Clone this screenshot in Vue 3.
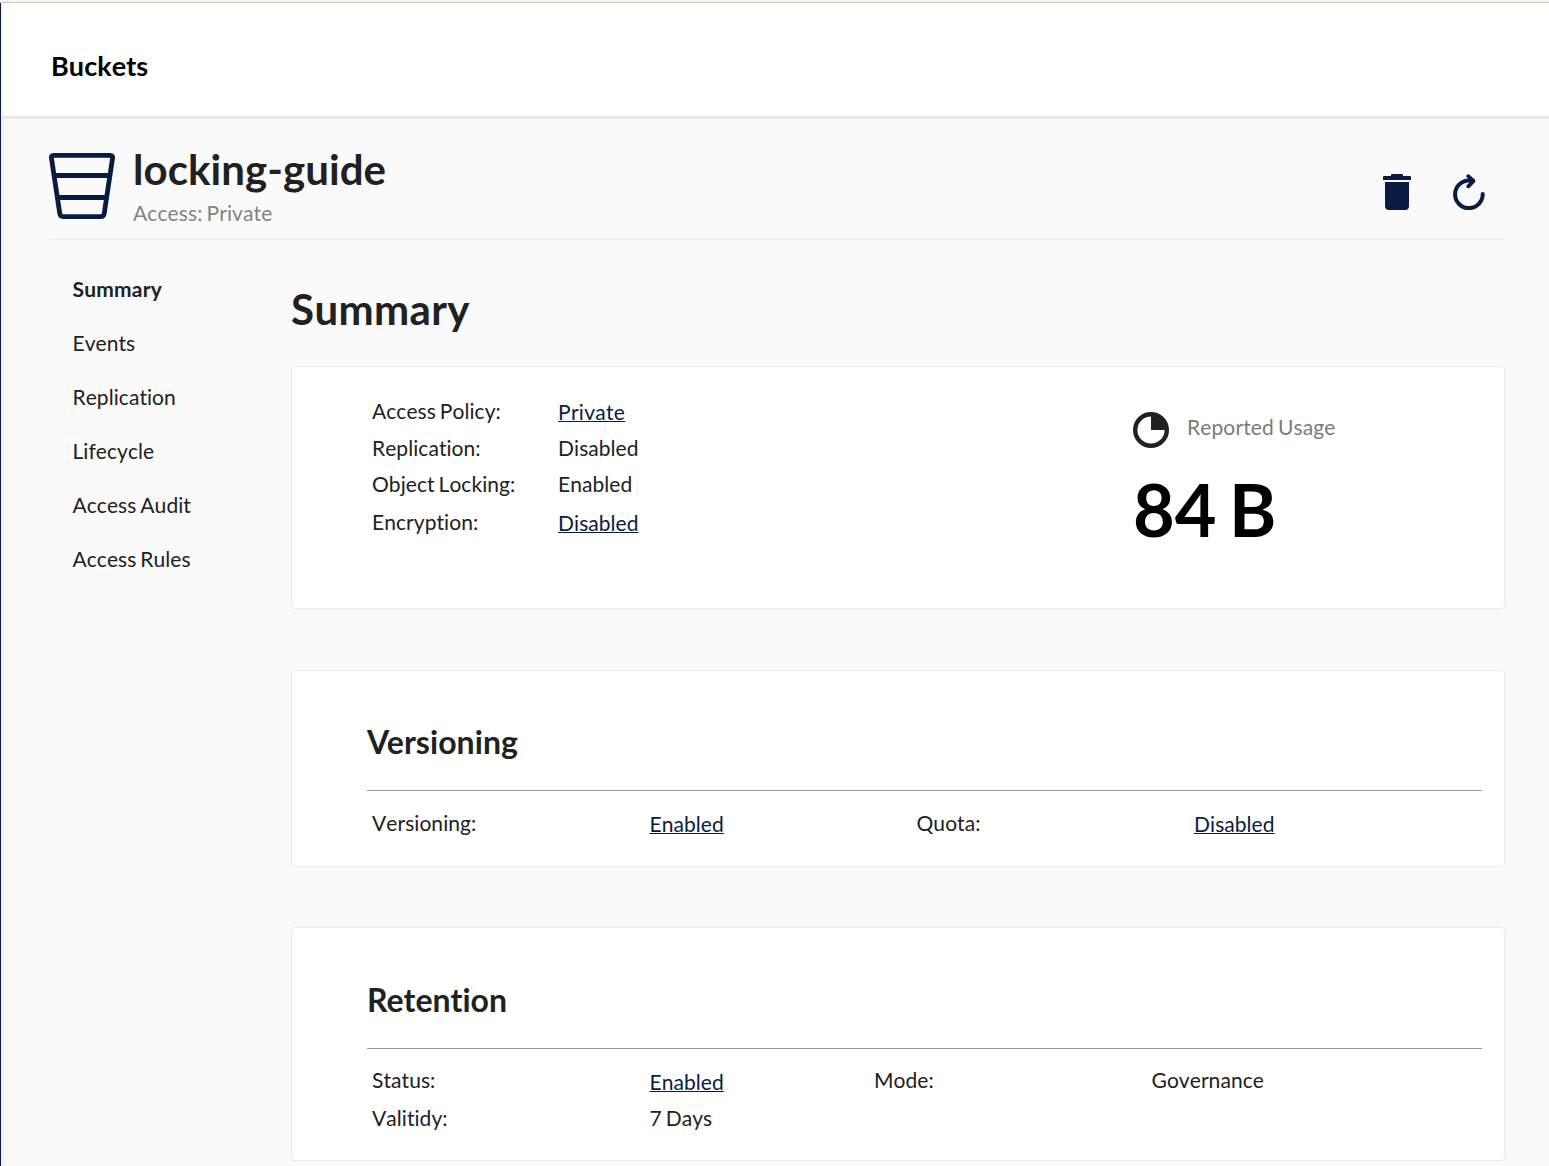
<script setup>
const tabs = ['Summary', 'Events', 'Replication', 'Lifecycle', 'Access Audit', 'Access Rules']
const details = [
  { label: 'Access Policy:', value: 'Private', link: true, height: 37 },
  { label: 'Replication:', value: 'Disabled', height: 36 },
  { label: 'Object Locking:', value: 'Enabled', height: 38 },
  { label: 'Encryption:', value: 'Disabled', link: true, height: 38 },
]
</script>

<template>
  <div class="page">
    <div class="chrome"></div>
    <div class="shell">
      <header class="topbar">Buckets</header>
      <main>
        <section class="bucket">
          <svg class="bucket-icon" width="66" height="66" viewBox="0 0 66 66" fill="none" stroke="#081c42" stroke-width="4.8" stroke-linejoin="round">
            <path d="M4.6 2.4H61.4Q64 2.4 63.5 5.3L55.2 60.7Q54.7 63.6 52 63.6H14Q11.300 63.600 10.800 60.700L2.500 5.300Q2 2.400 4.600 2.400ZM5.500 22.500H60.500M9 44.500H57" />
          </svg>
          <div class="names">
            <h1>locking-guide</h1>
            <span class="access">Access: Private</span>
          </div>
          <div class="actions">
            <svg width="28" height="36" viewBox="0 0 28 36" fill="#081c42">
              <path d="M8 1Q8 0 9 0H19Q20 0 20 1V2H27Q28 2 28 3V6H0V3Q0 2 1 2H8ZM2 8H26V32Q26 36 22 36H6Q2 36 2 32Z" />
            </svg>
            <svg class="refresh" width="32" height="36" viewBox="0 0 32 36" fill="none" stroke="#081c42" stroke-width="4" stroke-linecap="round" stroke-linejoin="round">
              <path d="M29.700 20A13.800 13.800 0 1 1 15.800 6.500H20" />
              <path d="M15.300 2.200L20.400 7.200L15.300 12.300" stroke-width="3.800" />
            </svg>
          </div>
        </section>
        <div class="body">
          <nav>
            <a v-for="(t, i) in tabs" :key="t" :class="{ active: i === 0 }">{{ t }}</a>
          </nav>
          <div class="content">
            <h2>Summary</h2>
            <section class="card overview">
              <div class="details">
                <div v-for="d in details" :key="d.label" class="detail" :style="{ height: d.height + 'px' }">
                  <span class="label">{{ d.label }}</span>
                  <span :class="{ link: d.link }">{{ d.value }}</span>
                </div>
              </div>
              <div class="usage">
                <div class="usage-head">
                  <svg width="36" height="36" viewBox="0 0 36 36">
                    <circle cx="18" cy="18" r="15.800" fill="none" stroke="#212121" stroke-width="4.400" />
                    <path d="M18 4A14 14 0 0 1 32 18H18Z" fill="#212121" />
                  </svg>
                  <span>Reported Usage</span>
                </div>
                <div class="amount">84 B</div>
              </div>
            </section>
            <section class="card versioning">
              <h3>Versioning</h3>
              <div class="row">
                <span class="c1">Versioning:</span>
                <span class="c2 link">Enabled</span>
                <span class="c1">Quota:</span>
                <span class="link">Disabled</span>
              </div>
            </section>
            <section class="card retention">
              <h3>Retention</h3>
              <div class="row">
                <span class="c1">Status:</span>
                <span class="c2 link">Enabled</span>
                <span class="c1">Mode:</span>
                <span>Governance</span>
              </div>
              <div class="row second">
                <span class="c1">Valitidy:</span>
                <span>7 Days</span>
              </div>
            </section>
          </div>
        </div>
      </main>
    </div>
  </div>
</template>

<style>
body {
  margin: 0;
  overflow: hidden;
}
</style>

<style scoped>
* {
  box-sizing: border-box;
}
.page {
  height: 1166px;
  overflow: hidden;
  display: flex;
  flex-direction: column;
  font: 21px/36px Lato, sans-serif;
  font-kerning: none;
  font-variant-ligatures: none;
  letter-spacing: 0.06px;
  word-spacing: -1.500px;
  color: #212121;
  background: #fafafa;
}
.chrome {
  flex: 0 0 3px;
  background: #f7f6f5;
  border-bottom: 1px solid #cfc7c0;
}
.shell {
  flex: 1;
  min-height: 0;
  border-left: 1px solid #081c42;
  box-shadow: inset 9px 0 9px -7px rgba(0, 0, 0, 0.05);
}
.topbar {
  height: 116px;
  padding: 45px 0 0 50px;
  background: linear-gradient(90deg, #f9f9f9, #fff 8px);
  border-bottom: 3px solid #e8e8e8;
  font-size: 27px;
  font-weight: 700;
  color: #000;
}
main {
  padding: 0 44px 0 48px;
}
.bucket {
  height: 121px;
  display: flex;
  border-bottom: 1px solid #eaeaea;
}
.bucket-icon {
  flex: none;
  margin: 34px 18px 0 0;
}
.names {
  flex: 1;
  padding-top: 24px;
}
h1,
h2,
h3 {
  margin: 0;
  font-weight: 700;
}
h1 {
  font-size: 42px;
  line-height: 52px;
}
.access {
  display: block;
  line-height: 36px;
  letter-spacing: 0.1px;
  color: #838383;
}
.actions {
  display: flex;
  gap: 42px;
  padding: 55px 20px 0 0;
}
.body {
  display: flex;
}
nav {
  flex: 0 0 242px;
  display: flex;
  flex-direction: column;
  padding: 22px 0 0 23.500px;
}
nav a {
  line-height: 54px;
}
.active {
  font-weight: 700;
  letter-spacing: 0.200px;
}
.content {
  flex: 1;
}
h2 {
  height: 126px;
  padding-top: 43px;
  font-size: 42px;
  line-height: 52px;
  letter-spacing: 0.350px;
}
.card {
  border: 1px solid #eaeaea;
  border-radius: 4px;
  background: #fff;
}
.link {
  color: #081c42;
  text-decoration: underline 1px;
  position: relative;
  top: 1px;
}
.overview {
  height: 243px;
  display: flex;
  padding: 26px 0 0 80px;
}
.details {
  width: 761px;
}
.detail {
  display: flex;
}
.detail:first-child .link {
  letter-spacing: 0.280px;
}
.label {
  width: 186px;
}
.usage-head {
  display: flex;
  gap: 18px;
  height: 55px;
  color: #7b7b7b;
}
.usage-head svg {
  margin-top: 19px;
}
.usage-head span {
  margin-top: 16px;
  letter-spacing: 0.120px;
}
.amount {
  margin-top: 19px;
  font-size: 72px;
  line-height: 84px;
  font-weight: 700;
  letter-spacing: 0;
  word-spacing: -5px;
  color: #000;
}
.versioning {
  margin-top: 61px;
  height: 197px;
}
.retention {
  margin-top: 60px;
  height: 234px;
}
h3 {
  height: 72px;
  margin: 48px 22px 0 75px;
  border-bottom: 1px solid #999;
  font-size: 32px;
  line-height: 46px;
  font-kerning: normal;
}
.row {
  display: flex;
  padding: 14px 0 0 80px;
}
.c1 {
  width: 277.500px;
}
.c2 {
  width: 267px;
}
.retention .row {
  padding-top: 13px;
}
.retention .c2 {
  width: 224.500px;
}
.retention h3 {
  height: 72px;
  margin-top: 49px;
}
.retention .link {
  top: 2px;
}
.retention .second {
  padding-top: 2px;
}
</style>
